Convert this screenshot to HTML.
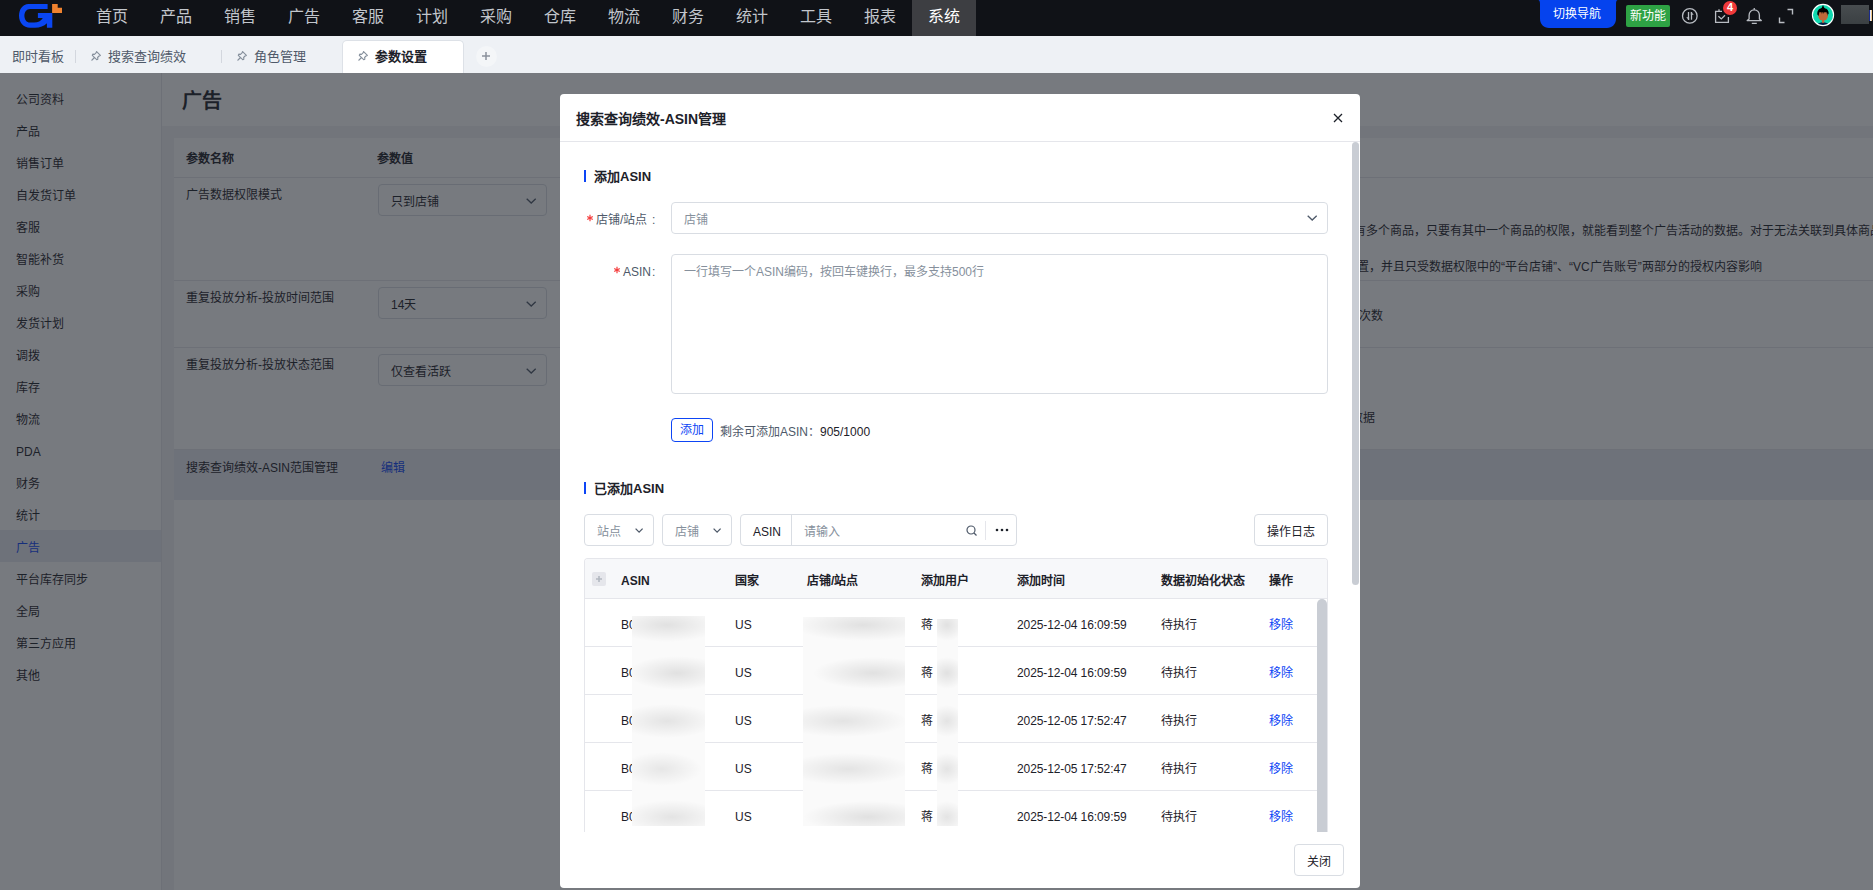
<!DOCTYPE html>
<html lang="zh-CN"><head><meta charset="utf-8">
<style>
*{box-sizing:border-box;margin:0;padding:0}
html,body{width:1873px;height:890px;overflow:hidden;background:#f2f3f5;font-family:"Liberation Sans",sans-serif;font-size:12px;color:#1d2129}
.abs{position:absolute}
.t{position:absolute;white-space:nowrap;line-height:1;margin-top:1px}
/* top bar */
#top{position:absolute;left:0;top:0;width:1873px;height:36px;background:#101217}
.nav{position:absolute;top:0;height:36px;width:64px;line-height:34px;text-align:center;font-size:16px;color:#c2c6cc}
.nav.act{background:#3d3e42;color:#fff}
/* tabs */
#tabs{position:absolute;left:0;top:36px;width:1873px;height:37px;background:#eef1f5}
.tab{position:absolute;top:0;height:37px;line-height:41px;font-size:13px;color:#4e5969}
.sep{position:absolute;top:14px;width:1px;height:13px;background:#d3d7de}
/* sidebar */
#side{position:absolute;left:0;top:73px;width:162px;height:817px;background:#fff;border-right:1px solid #e5e6eb}
.si{position:absolute;left:0;width:161px;height:32px;line-height:36px;padding-left:16px;font-size:12px;color:#1d2129}
.si.act{background:#e8eaf3;color:#0d45f5}
/* main */
#mhead{position:absolute;left:162px;top:73px;width:1711px;height:53px;background:#fff}
#panel{position:absolute;left:174px;top:138px;width:1699px;height:752px;background:#fff}
.row{position:absolute;left:0;width:1699px;border-bottom:1px solid #e5e6eb}
.sel{position:absolute;height:32px;border:1px solid #d9dde3;border-radius:4px;background:#fff}
.chev{position:absolute;width:8px;height:8px;border-right:1.3px solid #4e5969;border-bottom:1.3px solid #4e5969;transform:rotate(45deg)}
#mask{position:absolute;left:0;top:73px;width:1873px;height:817px;background:rgba(29,33,41,0.6)}
/* modal */
#modal{position:absolute;left:560px;top:94px;width:800px;height:794px;background:#fff;border-radius:4px;overflow:hidden}
.b{font-weight:bold}
</style></head><body>

<div id="top">
  <svg class="abs" style="left:14px;top:0" width="56" height="32" viewBox="0 0 56 32">
    <path d="M33.6 3.95H14.4C9 3.95 5 9 5 15.8C5 22.5 9.5 27.7 16 27.7H21C26 27.7 30 26 32.9 23.2V27.7H38.3V12.9H23.9V18H28.8C27 21 24 22.6 20 22.6H16C12.5 22.6 10.4 19.5 10.4 15.8C10.4 12 12.5 9 16 9H33.6Z" fill="#0a46f2"/>
    <path d="M38.1 3.95H43.7V7.7H48V13.1H38.1Z" fill="#f0822f"/>
  </svg>
  <div class="nav" style="left:80px">首页</div>
  <div class="nav" style="left:144px">产品</div>
  <div class="nav" style="left:208px">销售</div>
  <div class="nav" style="left:272px">广告</div>
  <div class="nav" style="left:336px">客服</div>
  <div class="nav" style="left:400px">计划</div>
  <div class="nav" style="left:464px">采购</div>
  <div class="nav" style="left:528px">仓库</div>
  <div class="nav" style="left:592px">物流</div>
  <div class="nav" style="left:656px">财务</div>
  <div class="nav" style="left:720px">统计</div>
  <div class="nav" style="left:784px">工具</div>
  <div class="nav" style="left:848px">报表</div>
  <div class="nav act" style="left:912px">系统</div>

  <svg class="abs" style="left:1538px;top:0" width="80" height="28" viewBox="0 0 80 28"><path d="M0 0H80C78.3 0 78 2 78 4V19C78 24 74 28 69 28H11C6 28 2 24 2 19V4C2 2 1.7 0 0 0Z" fill="#0543ee"/></svg><div class="t" style="left:1553px;top:7px;color:#fff;font-size:12px">切换导航</div>
  <div class="abs" style="left:1626px;top:5px;width:44px;height:22px;background:#2ea244;border-radius:2px;color:#fff;font-size:12px;line-height:22px;text-align:center">新功能</div>
  <svg class="abs" style="left:1681px;top:7px" width="18" height="18" viewBox="0 0 18 18"><circle cx="8.8" cy="8.9" r="7.3" fill="none" stroke="#b8bcc2" stroke-width="1.3"/><path d="M7.5 5V12.9M10.5 4.9V12.7" stroke="#b8bcc2" stroke-width="1.3"/><path d="M5.2 10.3H8.15V13.2Z M9.85 4.7L12.8 7.8H9.85Z" fill="#b8bcc2"/></svg>
  <svg class="abs" style="left:1714px;top:8px" width="16" height="16" viewBox="0 0 16 16"><path d="M8 3.4H1.6V14.4H14.4V9" fill="none" stroke="#b8bcc2" stroke-width="1.3"/><path d="M5 1.2V3.4" stroke="#b8bcc2" stroke-width="1.3"/><path d="M4.4 8.2L7.3 10.9L11 7.3" fill="none" stroke="#b8bcc2" stroke-width="1.3"/></svg>
  <div class="abs" style="left:1723px;top:1px;width:14px;height:14px;border-radius:7px;background:#f0393a;color:#fff;font-size:11px;font-weight:bold;line-height:13px;text-align:center">4</div>
  <svg class="abs" style="left:1746px;top:7px" width="17" height="18" viewBox="0 0 17 18"><path d="M8.25 2.8C5.2 2.8 3.1 5.2 3.1 8.3V12L1.2 13.6H15.3L13.4 12V8.3C13.4 5.2 11.3 2.8 8.25 2.8Z" fill="none" stroke="#b8bcc2" stroke-width="1.3" stroke-linejoin="round"/><path d="M8.25 0.9V2.8M5.8 16.4H10.8" stroke="#b8bcc2" stroke-width="1.3"/></svg>
  <svg class="abs" style="left:1778px;top:8px" width="16" height="16" viewBox="0 0 16 16"><path d="M9.5 1.5H14.5V6.5M1.5 9.5V14.5H6.5" fill="none" stroke="#b8bcc2" stroke-width="1.4"/></svg>
  <svg class="abs" style="left:1811px;top:3px" width="24" height="24" viewBox="0 0 24 24"><circle cx="12" cy="12" r="10.6" fill="#0fd8ae" stroke="#fff" stroke-width="1.1"/><clipPath id="cc"><circle cx="12" cy="12" r="10.1"/></clipPath><g clip-path="url(#cc)"><path d="M5.5 23C6.5 20.2 9 19.2 12 19.2C15 19.2 17.5 20.2 18.5 23Z" fill="#0b1a45"/><rect x="11" y="15.5" width="2.2" height="4.2" fill="#c0683a"/><ellipse cx="12.1" cy="12.6" rx="4.9" ry="5" fill="#c0683a"/><path d="M6.3 11.5C6 7 8.5 5 12 5C15.5 5 18 7 17.7 11.5L16.6 10.2L16.3 13L15.6 9.2H13.2L12.8 11L12.3 9.2H11.3L11 11.5L10.5 9.2H8.3L7.6 13Z" fill="#000"/><path d="M12 2L10.3 5.8H13.7Z" fill="#000"/></g></svg>
  <div class="abs" style="left:1841px;top:5px;width:28px;height:19px;background:linear-gradient(180deg,#474c4f,#3b4043)"></div>
  <div class="abs" style="left:1869px;top:10px;width:1px;height:11px;background:#1a2a8a"></div><div class="abs" style="left:1870px;top:10px;width:1px;height:11px;background:#e8ecff"></div><div class="abs" style="left:1871px;top:10px;width:1px;height:11px;background:#f0c88a"></div>
</div>

<div id="tabs">
  <div class="tab" style="left:12px">即时看板</div>
  <div class="sep" style="left:75px"></div>
  <svg class="abs" style="left:90px;top:14px" width="12" height="12" viewBox="0 0 12 12"><path d="M6.6 1.6L10.4 5.4L9.1 6L7.6 7.5L7.9 9.2L6.7 9.7L2.3 5.3L2.8 4.1L4.5 4.4L6 2.9Z" fill="none" stroke="#86909c" stroke-width="1.1" stroke-linejoin="round"/><path d="M4.3 7.7L1.9 10.1" stroke="#86909c" stroke-width="1.3" stroke-linecap="round"/></svg>
  <div class="tab" style="left:108px">搜索查询绩效</div>
  <div class="sep" style="left:221px"></div>
  <svg class="abs" style="left:236px;top:14px" width="12" height="12" viewBox="0 0 12 12"><path d="M6.6 1.6L10.4 5.4L9.1 6L7.6 7.5L7.9 9.2L6.7 9.7L2.3 5.3L2.8 4.1L4.5 4.4L6 2.9Z" fill="none" stroke="#86909c" stroke-width="1.1" stroke-linejoin="round"/><path d="M4.3 7.7L1.9 10.1" stroke="#86909c" stroke-width="1.3" stroke-linecap="round"/></svg>
  <div class="tab" style="left:254px">角色管理</div>
  <div class="abs" style="left:342px;top:4px;width:122px;height:33px;background:#fff;border:1px solid #dde1e7;border-bottom:none;border-radius:5px 5px 0 0"></div>
  <svg class="abs" style="left:357px;top:14px" width="12" height="12" viewBox="0 0 12 12"><path d="M6.6 1.6L10.4 5.4L9.1 6L7.6 7.5L7.9 9.2L6.7 9.7L2.3 5.3L2.8 4.1L4.5 4.4L6 2.9Z" fill="none" stroke="#86909c" stroke-width="1.1" stroke-linejoin="round"/><path d="M4.3 7.7L1.9 10.1" stroke="#86909c" stroke-width="1.3" stroke-linecap="round"/></svg>
  <div class="tab b" style="left:375px;color:#1d2129">参数设置</div>
  <div class="abs" style="left:476px;top:10px;width:21px;height:21px;border-radius:11px;background:rgba(255,255,255,0.35)"></div><svg class="abs" style="left:481px;top:15px" width="10" height="10" viewBox="0 0 10 10"><path d="M5 1V9M1 5H9" stroke="#8a919c" stroke-width="1.5"/></svg>
</div>

<div id="side">
  <div class="si" style="top:9px">公司资料</div>
  <div class="si" style="top:41px">产品</div>
  <div class="si" style="top:73px">销售订单</div>
  <div class="si" style="top:105px">自发货订单</div>
  <div class="si" style="top:137px">客服</div>
  <div class="si" style="top:169px">智能补货</div>
  <div class="si" style="top:201px">采购</div>
  <div class="si" style="top:233px">发货计划</div>
  <div class="si" style="top:265px">调拨</div>
  <div class="si" style="top:297px">库存</div>
  <div class="si" style="top:329px">物流</div>
  <div class="si" style="top:361px">PDA</div>
  <div class="si" style="top:393px">财务</div>
  <div class="si" style="top:425px">统计</div>
  <div class="si act" style="top:457px">广告</div>
  <div class="si" style="top:489px">平台库存同步</div>
  <div class="si" style="top:521px">全局</div>
  <div class="si" style="top:553px">第三方应用</div>
  <div class="si" style="top:585px">其他</div>
</div>

<div id="mhead"><div class="t b" style="left:20px;top:17px;font-size:20px">广告</div></div>

<div id="panel">
  <div class="row" style="top:0;height:40px"></div>
  <div class="t b" style="left:12px;top:14px">参数名称</div>
  <div class="t b" style="left:203px;top:14px">参数值</div>
  <div class="row" style="top:40px;height:103px"></div>
  <div class="row" style="top:143px;height:67px"></div>
  <div class="row" style="top:210px;height:102px"></div>
  <div class="row" style="top:312px;height:50px;background:#e8eaf3;border-bottom:none"></div>
  <div class="t" style="left:12px;top:50px;color:#1d2129">广告数据权限模式</div>
  <div class="sel" style="left:204px;top:46px;width:169px"><div class="t" style="left:12px;top:10px;color:#1d2129">只到店铺</div><svg class="abs" style="left:147px;top:13px" width="11" height="6" viewBox="0 0 11 6"><path d="M0.7 0.7L5.2 5L9.7 0.7" fill="none" stroke="#4e5969" stroke-width="1.3"/></svg></div>
  <div class="t" style="left:12px;top:153px;color:#1d2129">重复投放分析-投放时间范围</div>
  <div class="sel" style="left:204px;top:149px;width:169px"><div class="t" style="left:12px;top:10px;color:#1d2129">14天</div><svg class="abs" style="left:147px;top:13px" width="11" height="6" viewBox="0 0 11 6"><path d="M0.7 0.7L5.2 5L9.7 0.7" fill="none" stroke="#4e5969" stroke-width="1.3"/></svg></div>
  <div class="t" style="left:12px;top:220px;color:#1d2129">重复投放分析-投放状态范围</div>
  <div class="sel" style="left:204px;top:216px;width:169px"><div class="t" style="left:12px;top:10px;color:#1d2129">仅查看活跃</div><svg class="abs" style="left:147px;top:13px" width="11" height="6" viewBox="0 0 11 6"><path d="M0.7 0.7L5.2 5L9.7 0.7" fill="none" stroke="#4e5969" stroke-width="1.3"/></svg></div>
  <div class="t" style="left:12px;top:323px;color:#1d2129">搜索查询绩效-ASIN范围管理</div>
  <div class="t" style="left:207px;top:323px;color:#0d45f5">编辑</div>
  <div class="t" style="left:1180px;top:86px;color:#1d2129">有多个商品，只要有其中一个商品的权限，就能看到整个广告活动的数据。对于无法关联到具体商品的数据</div>
  <div class="t" style="left:1183px;top:122px;color:#1d2129">置，并且只受数据权限中的“平台店铺”、“VC广告账号”两部分的授权内容影响</div>
  <div class="t" style="left:1185px;top:171px;color:#1d2129">次数</div>
  <div class="t" style="left:1177px;top:273px;color:#1d2129">数据</div>
</div>

<div id="mask"></div>

<div id="modal">
  <div class="t b" style="left:16px;top:17px;font-size:14px">搜索查询绩效-ASIN管理</div>
  <svg class="abs" style="left:773px;top:19px" width="10" height="10" viewBox="0 0 10 10"><path d="M1 1L9 9M9 1L1 9" stroke="#1d2129" stroke-width="1.3"/></svg>
  <div class="abs" style="left:0;top:47px;width:800px;height:1px;background:#e5e6eb"></div>
  <div class="abs" style="left:792px;top:48px;width:7px;height:443px;background:#c9cdd4;border-radius:4px"></div>

  <div class="abs" style="left:24px;top:76px;width:2px;height:12px;background:#0d45f5"></div>
  <div class="t b" style="left:34px;top:75px;font-size:13px">添加ASIN</div>

  <svg class="abs" style="left:26px;top:120px" width="8" height="8" viewBox="0 0 8 8"><path d="M4 0.8V7.2M1.2 2.4L6.8 5.6M6.8 2.4L1.2 5.6" stroke="#f53f3f" stroke-width="1.2"/></svg>
  <div class="t" style="left:36px;top:119px;color:#4e5969">店铺/站点</div><div class="t" style="left:92px;top:119px;color:#4e5969">:</div>
  <div class="sel" style="left:111px;top:108px;width:657px"><div class="t" style="left:12px;top:10px;color:#86909c">店铺</div><svg class="abs" style="left:635px;top:12px" width="11" height="6" viewBox="0 0 11 6"><path d="M0.7 0.7L5.2 5L9.7 0.7" fill="none" stroke="#4e5969" stroke-width="1.3"/></svg></div>

  <svg class="abs" style="left:53px;top:172px" width="8" height="8" viewBox="0 0 8 8"><path d="M4 0.8V7.2M1.2 2.4L6.8 5.6M6.8 2.4L1.2 5.6" stroke="#f53f3f" stroke-width="1.2"/></svg>
  <div class="t" style="left:63px;top:171px;color:#4e5969">ASIN</div><div class="t" style="left:92px;top:171px;color:#4e5969">:</div>
  <div class="sel" style="left:111px;top:160px;width:657px;height:140px"><div class="t" style="left:12px;top:10px;color:#86909c">一行填写一个ASIN编码，按回车键换行，最多支持500行</div></div>

  <div class="abs" style="left:111px;top:324px;width:42px;height:24px;border:1px solid #0d45f5;border-radius:4px;color:#0d45f5;text-align:center;line-height:22px">添加</div>
  <div class="t" style="left:160px;top:331px;color:#4e5969">剩余可添加ASIN：<span style="color:#1d2129">905/1000</span></div>

  <div class="abs" style="left:24px;top:388px;width:2px;height:12px;background:#0d45f5"></div>
  <div class="t b" style="left:34px;top:387px;font-size:13px">已添加ASIN</div>

  <div class="sel" style="left:24px;top:420px;width:70px"><div class="t" style="left:12px;top:10px;color:#86909c">站点</div><svg class="abs" style="left:50px;top:13px" width="9" height="6" viewBox="0 0 9 6"><path d="M0.6 0.6L4.1 4.1L7.6 0.6" fill="none" stroke="#4e5969" stroke-width="1.3"/></svg></div>
  <div class="sel" style="left:102px;top:420px;width:70px"><div class="t" style="left:12px;top:10px;color:#86909c">店铺</div><svg class="abs" style="left:50px;top:13px" width="9" height="6" viewBox="0 0 9 6"><path d="M0.6 0.6L4.1 4.1L7.6 0.6" fill="none" stroke="#4e5969" stroke-width="1.3"/></svg></div>
  <div class="sel" style="left:180px;top:420px;width:277px">
    <div class="t" style="left:12px;top:10px;color:#1d2129">ASIN</div>
    <div class="abs" style="left:50px;top:0;width:1px;height:30px;background:#d9dde3"></div>
    <div class="t" style="left:63px;top:10px;color:#86909c">请输入</div>
    <svg class="abs" style="left:225px;top:10px" width="12" height="12" viewBox="0 0 12 12"><circle cx="5" cy="5" r="4" fill="none" stroke="#4e5969" stroke-width="1.2"/><path d="M8 8L10.5 10.5" stroke="#4e5969" stroke-width="1.2"/></svg>
    <div class="abs" style="left:244px;top:6px;width:1px;height:19px;background:#e5e6eb"></div>
    <svg class="abs" style="left:254px;top:13px" width="14" height="4" viewBox="0 0 14 4"><circle cx="2" cy="2" r="1.3" fill="#1d2129"/><circle cx="7" cy="2" r="1.3" fill="#1d2129"/><circle cx="12" cy="2" r="1.3" fill="#1d2129"/></svg>
  </div>
  <div class="sel" style="left:694px;top:420px;width:74px"><div class="t" style="left:12px;top:10px;color:#1d2129">操作日志</div></div>

  <div class="abs" id="tbl" style="left:24px;top:464px;width:744px;height:274px;border:1px solid #e5e6eb;border-bottom:none;border-radius:4px 4px 0 0;overflow:hidden">
    <div class="abs" style="left:0;top:0;width:744px;height:40px;background:#f7f8fa;border-bottom:1px solid #e5e6eb"></div>
    <div class="abs" style="left:7px;top:13px;width:14px;height:14px;background:#e5e6eb;border-radius:2px"></div><svg class="abs" style="left:10px;top:16px" width="8" height="8" viewBox="0 0 8 8"><path d="M4 1V7M1 4H7" stroke="#b2b8c1" stroke-width="1.6"/></svg>
    <div class="t b" style="left:36px;top:15px">ASIN</div>
    <div class="t b" style="left:150px;top:15px">国家</div>
    <div class="t b" style="left:222px;top:15px">店铺/站点</div>
    <div class="t b" style="left:336px;top:15px">添加用户</div>
    <div class="t b" style="left:432px;top:15px">添加时间</div>
    <div class="t b" style="left:576px;top:15px">数据初始化状态</div>
    <div class="t b" style="left:684px;top:15px">操作</div>
    <div class="abs" style="left:0;top:87px;width:744px;height:1px;background:#e5e6eb"></div>
    <div class="t" style="left:36px;top:59px">B0</div>
    <div class="t" style="left:150px;top:59px">US</div>
    <div class="t" style="left:336px;top:59px">蒋</div>
    <div class="t" style="left:432px;top:59px;letter-spacing:-0.1px">2025-12-04 16:09:59</div>
    <div class="t" style="left:576px;top:59px">待执行</div>
    <div class="t" style="left:684px;top:59px;color:#0d45f5">移除</div>
<div class="abs" style="left:0;top:135px;width:744px;height:1px;background:#e5e6eb"></div>
    <div class="t" style="left:36px;top:107px">B0</div>
    <div class="t" style="left:150px;top:107px">US</div>
    <div class="t" style="left:336px;top:107px">蒋</div>
    <div class="t" style="left:432px;top:107px;letter-spacing:-0.1px">2025-12-04 16:09:59</div>
    <div class="t" style="left:576px;top:107px">待执行</div>
    <div class="t" style="left:684px;top:107px;color:#0d45f5">移除</div>
<div class="abs" style="left:0;top:183px;width:744px;height:1px;background:#e5e6eb"></div>
    <div class="t" style="left:36px;top:155px">B0</div>
    <div class="t" style="left:150px;top:155px">US</div>
    <div class="t" style="left:336px;top:155px">蒋</div>
    <div class="t" style="left:432px;top:155px;letter-spacing:-0.1px">2025-12-05 17:52:47</div>
    <div class="t" style="left:576px;top:155px">待执行</div>
    <div class="t" style="left:684px;top:155px;color:#0d45f5">移除</div>
<div class="abs" style="left:0;top:231px;width:744px;height:1px;background:#e5e6eb"></div>
    <div class="t" style="left:36px;top:203px">B0</div>
    <div class="t" style="left:150px;top:203px">US</div>
    <div class="t" style="left:336px;top:203px">蒋</div>
    <div class="t" style="left:432px;top:203px;letter-spacing:-0.1px">2025-12-05 17:52:47</div>
    <div class="t" style="left:576px;top:203px">待执行</div>
    <div class="t" style="left:684px;top:203px;color:#0d45f5">移除</div>
<div class="abs" style="left:0;top:279px;width:744px;height:1px;background:#e5e6eb"></div>
    <div class="t" style="left:36px;top:251px">B0</div>
    <div class="t" style="left:150px;top:251px">US</div>
    <div class="t" style="left:336px;top:251px">蒋</div>
    <div class="t" style="left:432px;top:251px;letter-spacing:-0.1px">2025-12-04 16:09:59</div>
    <div class="t" style="left:576px;top:251px">待执行</div>
    <div class="t" style="left:684px;top:251px;color:#0d45f5">移除</div>

    <div class="abs" style="left:47px;top:57px;width:73px;height:210px;background:radial-gradient(ellipse 55px 17px at 35px 9px, rgba(0,0,0,0.1), rgba(0,0,0,0)),radial-gradient(ellipse 50px 17px at 45px 57px, rgba(0,0,0,0.1), rgba(0,0,0,0)),radial-gradient(ellipse 50px 17px at 35px 105px, rgba(0,0,0,0.09), rgba(0,0,0,0)),radial-gradient(ellipse 40px 17px at 30px 153px, rgba(0,0,0,0.08), rgba(0,0,0,0)),radial-gradient(ellipse 50px 17px at 40px 201px, rgba(0,0,0,0.09), rgba(0,0,0,0)),#fafafa"></div>
    <div class="abs" style="left:218px;top:58px;width:102px;height:209px;background:radial-gradient(ellipse 70px 16px at 60px 8px, rgba(0,0,0,0.1), rgba(0,0,0,0)),radial-gradient(ellipse 60px 16px at 70px 56px, rgba(0,0,0,0.1), rgba(0,0,0,0)),radial-gradient(ellipse 65px 16px at 40px 104px, rgba(0,0,0,0.09), rgba(0,0,0,0)),radial-gradient(ellipse 65px 16px at 45px 152px, rgba(0,0,0,0.09), rgba(0,0,0,0)),radial-gradient(ellipse 65px 16px at 65px 200px, rgba(0,0,0,0.1), rgba(0,0,0,0)),#fafafa"></div>
    <div class="abs" style="left:352px;top:60px;width:21px;height:207px;background:radial-gradient(ellipse 18px 16px at 10px 6px, rgba(0,0,0,0.1), rgba(0,0,0,0)),radial-gradient(ellipse 18px 16px at 10px 54px, rgba(0,0,0,0.1), rgba(0,0,0,0)),radial-gradient(ellipse 18px 16px at 10px 102px, rgba(0,0,0,0.09), rgba(0,0,0,0)),radial-gradient(ellipse 18px 16px at 10px 150px, rgba(0,0,0,0.09), rgba(0,0,0,0)),radial-gradient(ellipse 18px 16px at 10px 198px, rgba(0,0,0,0.09), rgba(0,0,0,0)),#fafafa"></div>
    <div class="abs" style="left:732px;top:40px;width:10px;height:233px;background:#c9cdd4;border-radius:5px 5px 0 0"></div>
  </div>

  <div class="sel" style="left:734px;top:750px;width:50px"><div class="t" style="left:12px;top:10px;color:#1d2129">关闭</div></div>
</div>

</body></html>
